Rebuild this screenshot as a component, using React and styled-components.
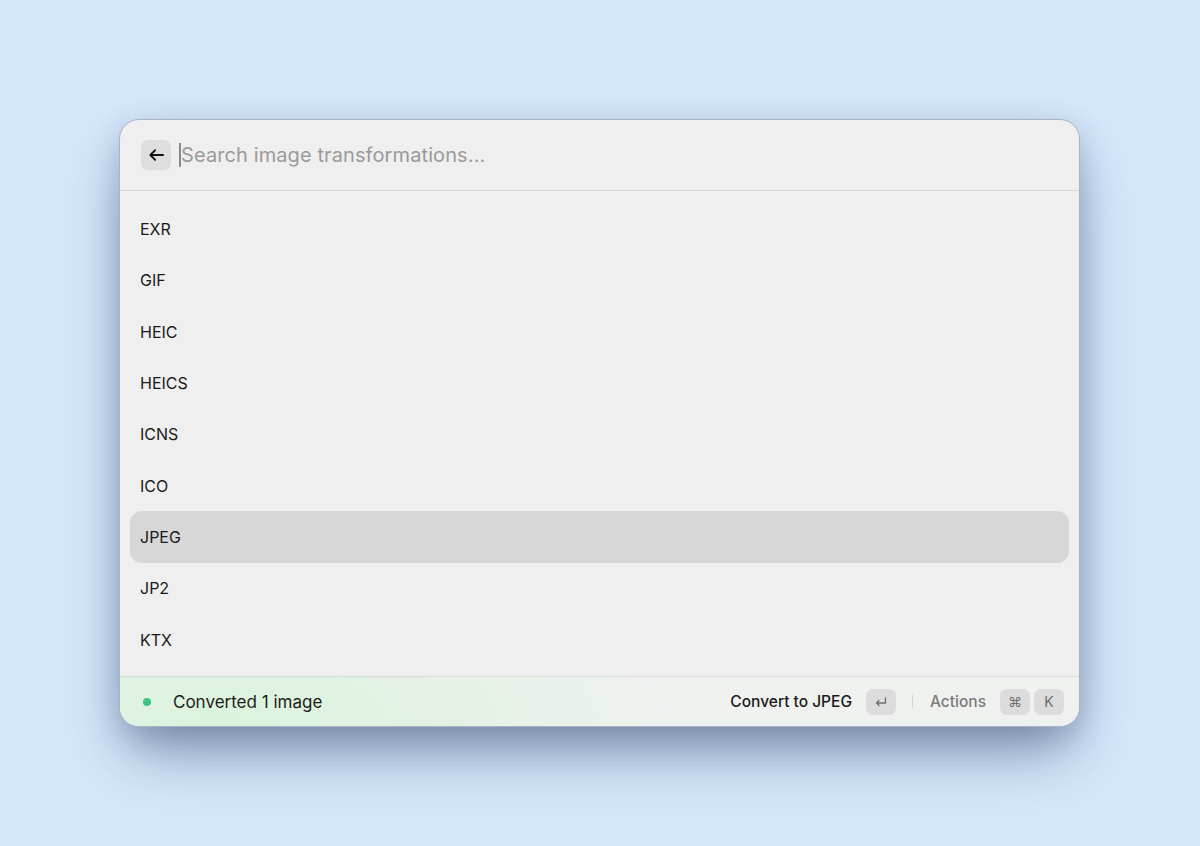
import React from "react";
import styled, { createGlobalStyle } from "styled-components";

const Global = createGlobalStyle`
  html, body { margin: 0; padding: 0; }
  body {
    background: #d5e7fb;
    font-family: Inter, "Noto Sans", sans-serif;
    -webkit-font-smoothing: antialiased;
  }
`;

const Stage = styled.div`
  height: 846px;
  display: flex;
  align-items: center;
  justify-content: center;
`;

const Palette = styled.div`
  width: 961px;
  height: 608px;
  margin: 0 1px 1px 0;
  box-sizing: border-box;
  background: #efefef;
  border: 1px solid #aab3c6;
  border-radius: 20px;
  overflow: hidden;
  display: flex;
  flex-direction: column;
  box-shadow: 0 32px 60px -10px rgba(40, 60, 100, 0.5),
    0 10px 30px rgba(40, 60, 100, 0.2);
`;

const Header = styled.div`
  height: 70px;
  flex: none;
  display: flex;
  align-items: center;
  gap: 8px;
  padding: 0 21px;
  border-bottom: 1px solid #d6d6d6;
`;

const BackButton = styled.div`
  width: 30px;
  height: 30px;
  border-radius: 7px;
  background: #dedede;
  display: flex;
  align-items: center;
  justify-content: center;
  color: #111;
`;

const SearchField = styled.div`
  display: flex;
  align-items: center;
  font-size: 20px;
  color: #9a9a9a;
  letter-spacing: 0.1px;
`;

const Caret = styled.span`
  width: 2px;
  height: 24px;
  background: #8a8a8a;
`;

const List = styled.div`
  flex: 1;
  padding: 13px 10px 0;
  display: flex;
  flex-direction: column;
`;

const Row = styled.div`
  height: 51.3px;
  flex: none;
  display: flex;
  align-items: center;
  padding-left: 10px;
  border-radius: 12px;
  font-size: 16px;
  color: #1a1a1a;
  background: ${(p) => (p.$selected ? "#d7d7d7" : "transparent")};
`;

const Footer = styled.div`
  height: 48px;
  flex: none;
  display: flex;
  align-items: center;
  padding: 1px 15px 0 23px;
  border-top: 1px solid #d8dcd8;
  background: radial-gradient(
      ellipse 460px 150px at 100px 40px,
      #dbf3dd 0%,
      rgba(222, 242, 224, 0.65) 50%,
      rgba(239, 239, 239, 0) 100%
    ),
    #eff1ef;
`;

const Dot = styled.span`
  width: 8px;
  height: 8px;
  border-radius: 50%;
  background: #3fc37f;
  margin-right: 22px;
`;

const Status = styled.span`
  font-size: 17px;
  color: #1c1c1c;
  flex: 1;
`;

const ActionLabel = styled.span`
  font-size: 15.5px;
  font-weight: 500;
  color: ${(p) => (p.$muted ? "#7b7b7b" : "#1a1a1a")};
  margin-right: 14px;
`;

const Key = styled.span`
  min-width: 30px;
  height: 26px;
  box-sizing: border-box;
  border-radius: 7px;
  background: #dcdcdc;
  color: #6f6f6f;
  font-size: 14px;
  display: inline-flex;
  align-items: center;
  justify-content: center;
  margin-left: ${(p) => (p.$tight ? "4px" : "0")};
`;

const Separator = styled.span`
  width: 1px;
  height: 13px;
  background: #d2d2d2;
  margin: 0 17px 0 16px;
`;

const formats = ["EXR", "GIF", "HEIC", "HEICS", "ICNS", "ICO", "JPEG", "JP2", "KTX"];

export default function App() {
  return (
    <>
      <Global />
      <Stage>
        <Palette>
          <Header>
            <BackButton>
              <svg width="17" height="16" viewBox="0 0 17 16" fill="none">
                <path
                  d="M15 8H2.5M7.2 3.2L2.4 8L7.2 12.8"
                  stroke="currentColor"
                  strokeWidth="1.9"
                  strokeLinecap="round"
                  strokeLinejoin="round"
                />
              </svg>
            </BackButton>
            <SearchField>
              <Caret />
              Search image transformations...
            </SearchField>
          </Header>
          <List>
            {formats.map((f) => (
              <Row key={f} $selected={f === "JPEG"}>
                {f}
              </Row>
            ))}
          </List>
          <Footer>
            <Dot />
            <Status>Converted 1 image</Status>
            <ActionLabel>Convert to JPEG</ActionLabel>
            <Key>
              <svg width="14" height="12" viewBox="0 0 14 12" fill="none">
                <path
                  d="M11.5 2V7H2.5M5 4.5L2.5 7L5 9.5"
                  stroke="currentColor"
                  strokeWidth="1.3"
                  strokeLinecap="round"
                  strokeLinejoin="round"
                />
              </svg>
            </Key>
            <Separator />
            <ActionLabel $muted>Actions</ActionLabel>
            <Key>⌘</Key>
            <Key $tight>K</Key>
          </Footer>
        </Palette>
      </Stage>
    </>
  );
}
